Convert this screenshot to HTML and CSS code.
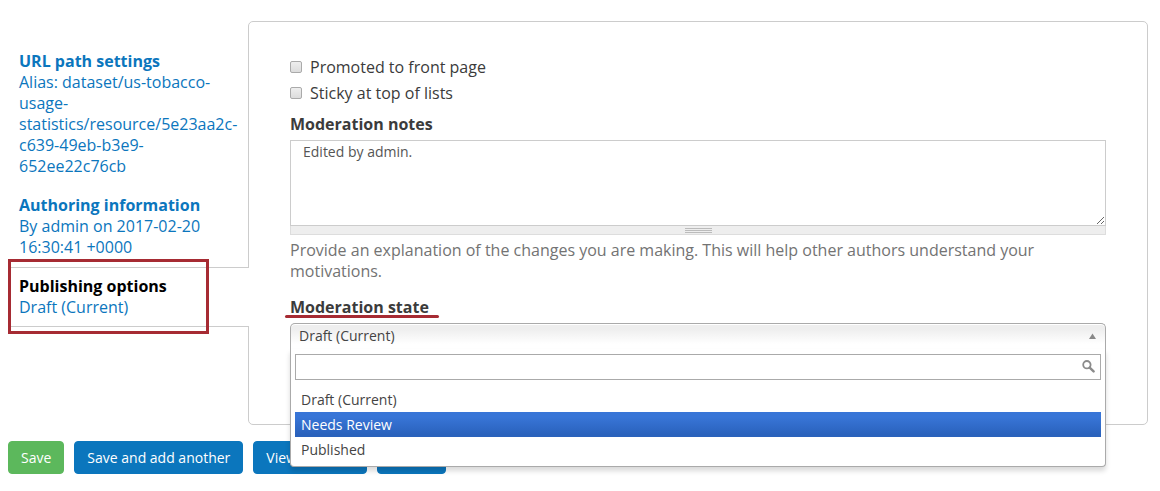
FILE: index.html
```html
<!DOCTYPE html>
<html lang="en">
<head>
<meta charset="utf-8">
<title>Publishing options</title>
<link rel="stylesheet" href="styles.css">
</head>
<body>
<form class="node-form">
  <div class="vertical-tabs">
    <nav class="tabs">
      <a class="tab" href="#path"><strong class="tab-title">URL path settings</strong>Alias: dataset/us-tobacco-usage-statistics/resource/5e23aa2c-c639-49eb-b3e9-652ee22c76cb</a>
      <a class="tab" href="#author"><strong class="tab-title">Authoring information</strong>By admin on 2017-02-20 16:30:41 +0000</a>
      <a class="tab tab-active" href="#publishing"><strong class="tab-title">Publishing options</strong>Draft (Current)<span class="mark-box"></span></a>
    </nav>
    <section class="panel" id="publishing">
      <div class="check-row">
        <input class="check" type="checkbox" id="promote">
        <label for="promote">Promoted to front page</label>
      </div>
      <div class="check-row">
        <input class="check" type="checkbox" id="sticky">
        <label for="sticky">Sticky at top of lists</label>
      </div>
      <label class="field-label notes-label" for="notes">Moderation notes</label>
      <textarea class="notes" id="notes">Edited by admin.</textarea>
      <div class="grippie"><span class="grip-lines"></span></div>
      <p class="help">Provide an explanation of the changes you are making. This will help other authors understand your motivations.</p>
      <label class="field-label state-label" for="state">Moderation state<span class="mark-line"></span></label>
      <div class="select">
        <button class="select-choice" type="button" id="state" aria-haspopup="listbox" aria-expanded="true">
          <span>Draft (Current)</span>
          <svg class="arrow" width="7" height="6" viewBox="0 0 7 6"><path d="M3.5 0.5 L7 6 H0 Z" fill="#888"/></svg>
        </button>
        <div class="drop">
          <div class="search">
            <input class="search-input" type="text" aria-label="Search">
            <svg class="search-icon" width="13" height="13" viewBox="0 0 13 13" fill="none" stroke="#8b8b8b"><circle cx="4.9" cy="4.7" r="3.7" stroke-width="1.8"/><path d="M7.7 7.6 L11.6 11.4" stroke-width="2.4" stroke-linecap="round"/></svg>
          </div>
          <ul class="options" role="listbox" aria-label="Moderation state">
            <li class="option" role="option">Draft (Current)</li>
            <li class="option option-active" role="option" aria-selected="true">Needs Review</li>
            <li class="option" role="option">Published</li>
          </ul>
        </div>
      </div>
    </section>
  </div>
  <div class="actions">
    <button class="btn btn-save" type="button">Save</button>
    <button class="btn" type="button">Save and add another</button>
    <button class="btn" type="button">View changes</button>
    <button class="btn" type="button">Delete</button>
  </div>
</form>
</body>
</html>
```
FILE: styles.css
```css
* { box-sizing: border-box; }

body {
  margin: 0;
  background: #fff;
  color: #3b3b3b;
  font-family: "Open Sans", "Noto Sans", sans-serif;
  font-size: 16px;
  line-height: 21px;
}

.node-form { padding: 21px 12px 16px 8px; }

.vertical-tabs {
  display: grid;
  grid-template-columns: 240px minmax(0, 1fr);
}

.tabs {
  position: relative;
  z-index: 1;
  display: flex;
  flex-direction: column;
  align-self: start;
  margin-right: -1px;
  padding-top: 21px;
}

.tab {
  padding: 9px 10px 9px 11px;
  color: #0b76bd;
  text-decoration: none;
}

.tab-title { display: block; }

.tab-active {
  position: relative;
  padding: 8px 10px 8px 11px;
  border: solid #ccc;
  border-width: 1px 0;
  background: #fff;
}

.tab-active .tab-title { color: #000; }

.mark-box {
  position: absolute;
  inset: -9px 40px -8px 0;
  border: 3px solid #a62b33;
}

.panel {
  padding: 35px 41px 75px;
  border: 1px solid #ccc;
  border-radius: 5px;
}

.check-row {
  display: flex;
  align-items: center;
  gap: 8px;
  margin-bottom: 5px;
}

.check {
  appearance: none;
  width: 12px;
  height: 12px;
  margin: 0 0 2px;
  border: 1px solid #aaa;
  border-radius: 2px;
  background: linear-gradient(#eee, #dcdcdc);
}

.field-label {
  display: block;
  width: fit-content;
  font-weight: 700;
}

.notes-label { margin-top: 10px; }

.notes {
  display: block;
  width: 100%;
  height: 86px;
  margin-top: 5px;
  padding: 1px 12px;
  border: 1px solid #ccc;
  border-radius: 0;
  color: #555;
  font: 14px/20px "Open Sans", "Noto Sans", sans-serif;
  resize: vertical;
}

.grippie {
  display: flex;
  align-items: center;
  justify-content: center;
  height: 9px;
  border: 1px solid #ddd;
  border-top: 0;
  background: #eee;
}

.grip-lines {
  width: 27px;
  height: 5px;
  background: repeating-linear-gradient(#bbb 0 1px, #eee 1px 2px);
}

.help {
  margin: 5px 0 15px;
  color: #737373;
}

.state-label {
  position: relative;
  margin-bottom: 5px;
}

.mark-line {
  position: absolute;
  right: -10px;
  bottom: 0;
  left: -5px;
  height: 3px;
  border-radius: 2px;
  background: #a62b33;
}

.select {
  position: relative;
  font-size: 14px;
}

.select-choice {
  display: flex;
  align-items: center;
  justify-content: space-between;
  width: 100%;
  height: 26px;
  padding: 0 9px 2px 8px;
  border: 1px solid #aaa;
  border-bottom: 0;
  border-radius: 5px 5px 0 0;
  background: linear-gradient(#eee 20%, #fff 80%);
  box-shadow: inset 0 1px 0 #fff;
  color: #444;
  font: inherit;
}

.drop {
  position: absolute;
  top: 100%;
  right: 0;
  left: 0;
  z-index: 2;
  padding: 5px 4px 4px;
  border: 1px solid #aaa;
  border-top: 0;
  border-radius: 0 0 4px 4px;
  background: #fff;
  box-shadow: 0 4px 5px rgba(0, 0, 0, 0.15);
}

.search { position: relative; }

.search-input {
  display: block;
  width: 100%;
  height: 26px;
  padding: 4px 20px 4px 5px;
  border: 1px solid #aaa;
  background: #fff;
  font: inherit;
}

.search-icon {
  position: absolute;
  top: 6px;
  right: 6px;
}

.options {
  margin: 7px 0 0;
  padding: 0;
  color: #444;
  list-style: none;
}

.option {
  padding: 2px 6px;
}

.option-active {
  background: linear-gradient(#3875d7 20%, #2a62bc 90%);
  color: #fff;
}

.actions {
  display: flex;
  flex-wrap: wrap;
  gap: 10px;
  margin-top: 16px;
}

.btn {
  padding: 6px 12px;
  border: 1px solid #0b76bd;
  border-radius: 4px;
  background: #0b76bd;
  color: #fff;
  font: 14px/19px "Open Sans", "Noto Sans", sans-serif;
}

.btn-save {
  border-color: #5cb85c;
  background: #5cb85c;
}
```
